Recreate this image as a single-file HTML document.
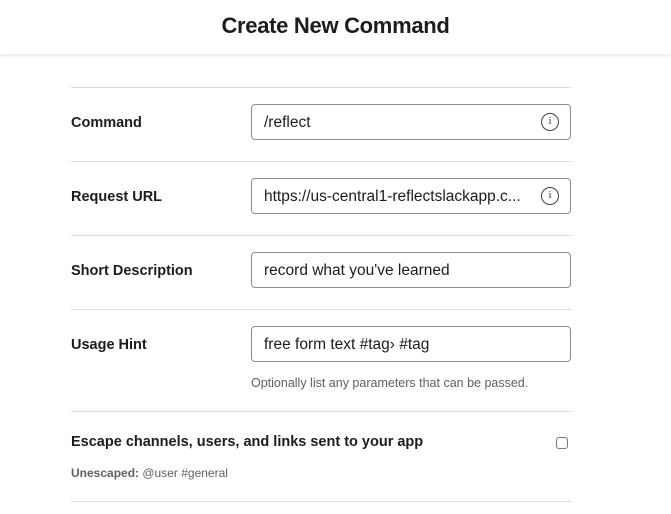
<!DOCTYPE html>
<html><head><style>
*{margin:0;padding:0;box-sizing:border-box}
body{width:671px;height:514px;overflow:hidden;background:#fff;font-family:"Liberation Sans",sans-serif;color:#1d1c1d;position:relative}
.hdr{position:absolute;left:0;top:0;width:671px;height:54px;background:#fff;box-shadow:0 1px 4px rgba(0,0,0,.12);text-align:center;font-weight:bold;font-size:22px;line-height:52px;letter-spacing:-0.3px;z-index:2}
.ln{position:absolute;left:71px;width:500px;height:1px;background:#dddddd}
.lb{position:absolute;left:71px;font-weight:bold;font-size:14.5px}
.in{position:absolute;left:251px;width:320px;height:36px;border:1px solid #8d8d8d;border-radius:4px;font-size:15.5px;line-height:36px;padding-left:12px;white-space:nowrap;overflow:hidden}
.ic{position:absolute;right:11px;top:8px;width:18px;height:18px;border:1.5px solid #444;border-radius:50%;font-size:11px;line-height:15px;text-align:center;font-family:"Liberation Serif",serif;color:#444}
.sm{position:absolute;font-size:12.5px;color:#616061}
</style></head><body>
<div class="hdr">Create New Command</div>
<div class="ln" style="top:87px"></div>
<div class="lb" style="top:115px">Command</div>
<div class="in" style="top:104px">/reflect<div class="ic">i</div></div>
<div class="ln" style="top:161px"></div>
<div class="lb" style="top:189px">Request URL</div>
<div class="in" style="top:178px">https://us-central1-reflectslackapp.c...<div class="ic">i</div></div>
<div class="ln" style="top:235px"></div>
<div class="lb" style="top:263px">Short Description</div>
<div class="in" style="top:252px">record what you've learned</div>
<div class="ln" style="top:309px"></div>
<div class="lb" style="top:337px">Usage Hint</div>
<div class="in" style="top:326px">free form text #tag› #tag</div>
<div class="sm" style="left:251px;top:376px">Optionally list any parameters that can be passed.</div>
<div class="ln" style="top:411px"></div>
<div class="lb" style="top:434px">Escape channels, users, and links sent to your app</div>
<div style="position:absolute;left:556px;top:437px;width:12px;height:12px;border:1px solid #777;border-radius:3px"></div>
<div class="sm" style="left:71px;top:466px;font-size:12px"><b style="color:#616061">Unescaped:</b> @user #general</div>
<div class="ln" style="top:501px"></div>
</body></html>
